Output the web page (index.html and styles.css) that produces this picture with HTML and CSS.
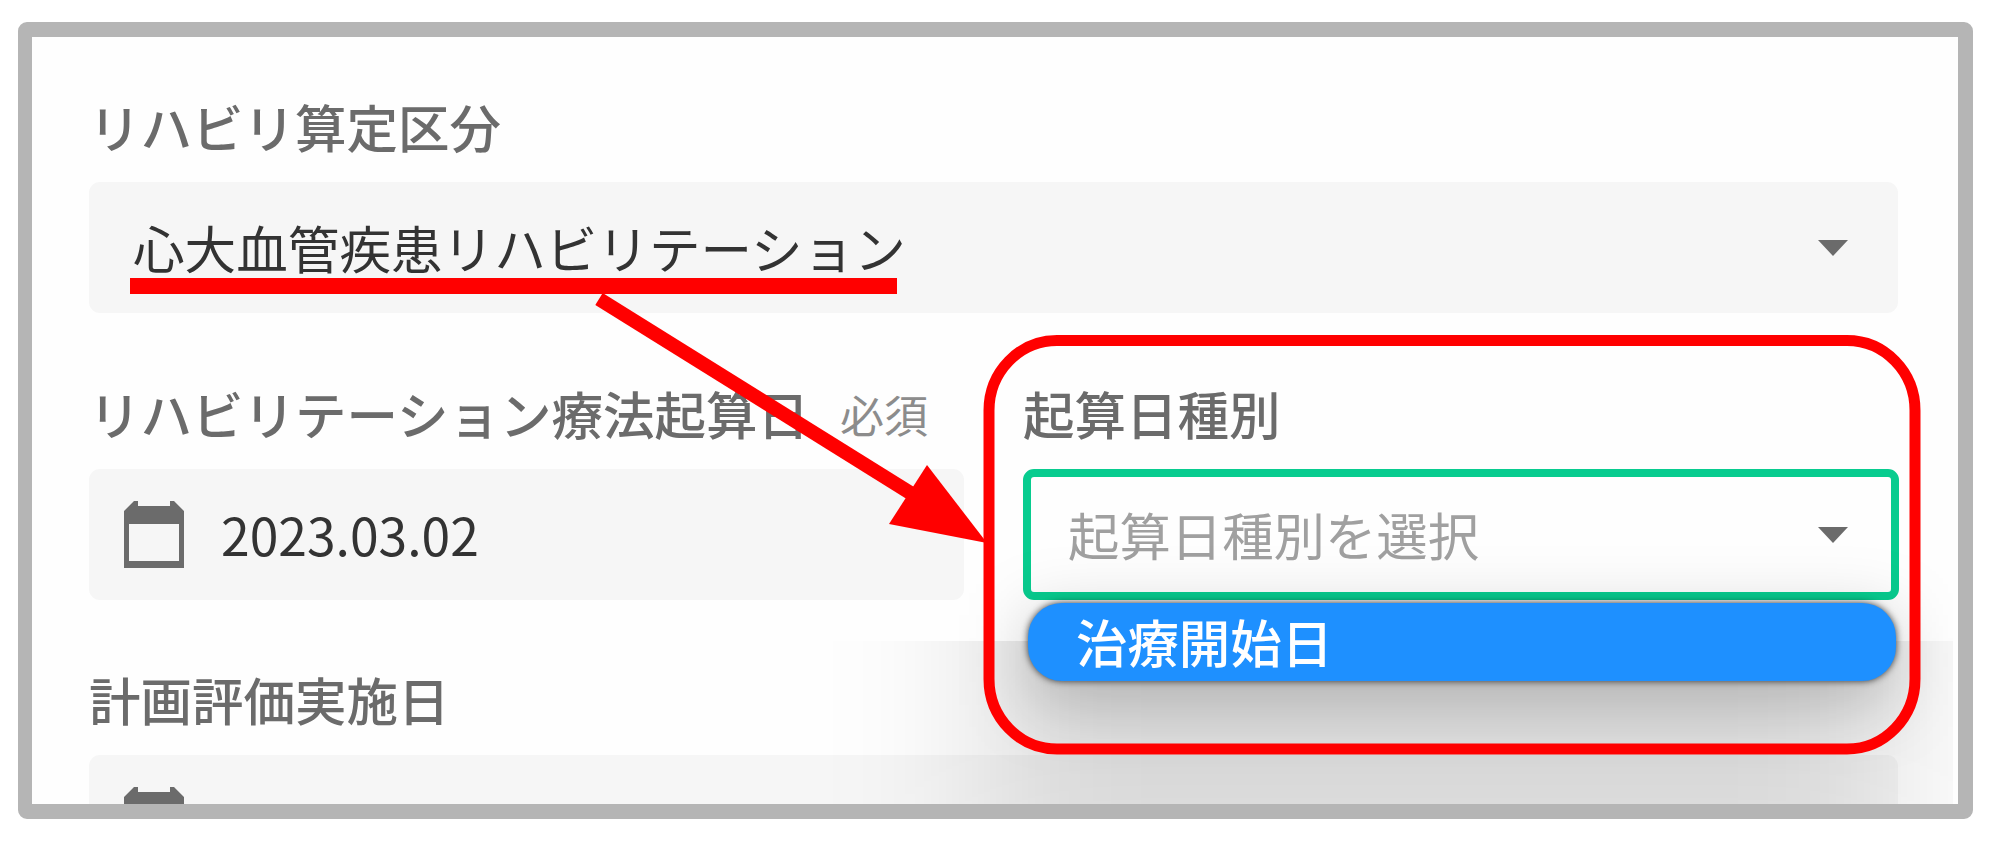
FILE: index.html
```html
<!DOCTYPE html>
<html lang="ja">
<head>
  <meta charset="UTF-8">
  <meta name="viewport" content="width=device-width, initial-scale=1.0">
  <title>リハビリ算定区分</title>
  <link rel="stylesheet" href="styles.css">
</head>
<body>

<div class="frame">
  <div class="form">
    <div class="form-group">
      <div class="label">リハビリ算定区分</div>
      <div class="field">
        <span class="value">心大血管疾患リハビリテーション</span>
        <svg class="caret" viewBox="0 0 34 17"><path d="M2 1h30L17 17z"/></svg>
      </div>
    </div>

    <div class="form-row">
      <div class="form-group">
        <div class="label">リハビリテーション療法起算日<span class="required">必須</span></div>
        <div class="field date">
          <svg class="calendar" viewBox="0 0 62 68"><path fill-rule="evenodd" d="M1 10L11 0h4v5h32V0h4l10 10v57H1zM6 23v37h50V23z"/></svg>
          <span class="value">2023.03.02</span>
        </div>
      </div>
      <div class="form-group">
        <div class="label">起算日種別</div>
        <div class="field focused">
          <span class="placeholder">起算日種別を選択</span>
          <svg class="caret" viewBox="0 0 34 17"><path d="M2 1h30L17 17z"/></svg>
        </div>
      </div>
    </div>

    <div class="form-group">
      <div class="label">計画評価実施日</div>
      <div class="field date">
        <svg class="calendar" viewBox="0 0 62 68"><path fill-rule="evenodd" d="M1 10L11 0h4v5h32V0h4l10 10v57H1zM6 23v37h50V23z"/></svg>
      </div>
    </div>
  </div>

  <!-- ドロップダウンの影 (下側だけ濃い影を重ねる) -->
  <div class="shade shade-all"><div class="shade-box"></div></div>
  <div class="shade shade-bottom"><div class="shade-box"></div></div>
  <div class="dropdown">治療開始日</div>
</div>

<!-- 注釈 -->
<svg class="annotation" viewBox="0 0 2000 845">
  <path class="mark" d="M130 278h767v16H130z"/>
  <path class="line" d="M599 299L912 494"/>
  <path class="mark" d="M987 543L927 465L889 524z"/>
  <rect class="line box" x="989" y="340.5" width="926" height="408.5" rx="68" ry="70"/>
</svg>

</body>
</html>
```
FILE: styles.css
```css
body {
  margin: 0;
  background: #fff;
  font-family: "Noto Sans CJK JP", sans-serif;
  font-size: 51.6px;
  color: #333;
  overflow: hidden;
}
.frame {
  position: relative;
  box-sizing: border-box;
  width: 1955px;
  height: 797px;
  margin: 22px 0 0 18px;
  border: 15px solid #b5b5b5;
  border-left-width: 14px;
  border-radius: 9px;
  background: #fefefe;
  overflow: hidden;
}
.form {
  display: flex;
  flex-direction: column;
  gap: 70px;
  padding: 59px 60px 0 57px;
}
.form-row {
  display: grid;
  grid-template-columns: 875px 876px;
  gap: 59px;
}
.label {
  height: 60px;
  line-height: 60px;
  margin-bottom: 26px;
  font-size: 51.5px;
  font-weight: 500;
  color: #6b6b6b;
  white-space: nowrap;
}
.required {
  position: relative;
  top: -2px;
  margin-left: 31px;
  font-size: 44px;
  font-weight: 400;
  color: #8c8c8c;
}
.field {
  display: flex;
  align-items: center;
  box-sizing: border-box;
  height: 131px;
  padding: 0 48px 0 44px;
  border-radius: 11px;
  background: #f6f6f6;
  line-height: 76px;
}
.value,
.placeholder {
  padding-bottom: 2px;
}
.caret {
  width: 34px;
  height: 17px;
  margin-left: auto;
  fill: #6b6b6b;
}
.date {
  gap: 36px;
  padding-left: 34px;
}
.calendar {
  width: 62px;
  height: 68px;
  fill: #6b6b6b;
}
.focused {
  padding: 0 41px 0 37px;
  border: 8px solid #08cc8f;
  background: #fefefe;
}
.placeholder {
  font-size: 51.4px;
  color: #a0a0a0;
}
/* 最後の行はラベルとの間隔が少し狭い */
.form-group:last-child > .label {
  margin-bottom: 26px;
}
.form > .form-group:last-child {
  margin-top: -1px;
}
.shade {
  position: absolute;
  left: 0;
  width: 1921px;
  overflow: hidden;
}
.shade-all {
  top: 363px;
  height: 404px;
}
.shade-all .shade-box {
  width: 868px;
  height: 90px;
  margin: 215px 0 0 996px;
  background: rgba(0, 0, 0, 0.2);
  filter: blur(33px);
}
.shade-bottom {
  top: 604px;
  height: 163px;
}
.shade-bottom .shade-box {
  width: 905px;
  height: 420px;
  margin: -170px 0 0 955px;
  background: rgba(0, 0, 0, 0.125);
  filter: blur(78px);
}
.dropdown {
  position: absolute;
  left: 996px;
  top: 566px;
  box-sizing: border-box;
  width: 868px;
  height: 78px;
  padding-left: 48px;
  border-radius: 34px;
  background: #1e90ff;
  box-shadow: 0 0 7px rgba(0, 0, 0, 0.75);
  color: #fff;
  font-weight: 500;
  font-size: 51.4px;
  line-height: 76px;
}
.annotation {
  position: absolute;
  left: 0;
  top: 0;
  width: 2000px;
  height: 845px;
}
.mark {
  fill: #f00;
}
.line {
  fill: none;
  stroke: #f00;
  stroke-width: 14;
}
.box {
  stroke-width: 11;
}
```
